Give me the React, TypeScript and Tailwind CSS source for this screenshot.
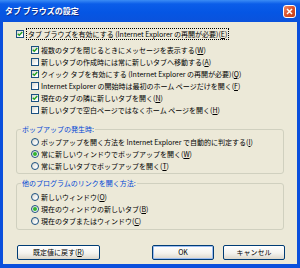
import React from 'react';

const Acc = ({ k }: { k: string }) => (
  <>
    (<span className="underline">{k}</span>)
  </>
);

function CheckBox({ checked }: { checked?: boolean }) {
  return (
    <span className="flex h-[8px] w-[8px] shrink-0 items-center justify-center border border-[#1c5180] bg-[linear-gradient(135deg,#d8d8d0,#ffffff_80%)]">
      {checked && (
        <svg width="6" height="6" viewBox="0 0 6 6">
          <path d="M0.7 2.7 L2.3 4.3 L5.3 1.1" stroke="#21a121" strokeWidth="1.4" fill="none" />
        </svg>
      )}
    </span>
  );
}

function Radio({ checked }: { checked?: boolean }) {
  return (
    <span className="flex h-[8px] w-[8px] shrink-0 items-center justify-center rounded-full border border-[#1c5180] bg-[linear-gradient(135deg,#d8d8d0,#ffffff_80%)]">
      {checked && <span className="h-[4px] w-[4px] rounded-full bg-[#2fb32f]" />}
    </span>
  );
}

function Row({ children, checked, radio }: { children: React.ReactNode; checked?: boolean; radio?: boolean }) {
  return (
    <div className="flex h-[12px] items-center whitespace-nowrap">
      {radio ? <Radio checked={checked} /> : <CheckBox checked={checked} />}
      <span className="ml-[2px]">{children}</span>
    </div>
  );
}

function Button({ children, width, isDefault }: { children: React.ReactNode; width: string; isDefault?: boolean }) {
  return (
    <button
      className={
        'flex h-[15px] items-center justify-center rounded-[2px] border border-[#003c74] bg-[linear-gradient(to_bottom,#ffffff,#f4f3ee_55%,#dcd7cb)] text-[7px] leading-none text-black ' +
        width +
        (isDefault ? ' shadow-[inset_0_0_0_1px_#9dbdf0]' : '')
      }
    >
      {children}
    </button>
  );
}

export default function App() {
  return (
    <div className="flex h-[268px] w-[300px] flex-col bg-[#0a4fdc] font-['Noto_Sans_CJK_JP',sans-serif] text-[7px] text-black">
      <div className="flex h-[22px] shrink-0 items-center justify-between bg-[linear-gradient(to_bottom,#3b8cf5_0%,#0b5de9_18%,#0556e4_55%,#0a52dc_100%)] pl-[5px] pr-[4px]">
        <span className="text-[8px] font-bold text-white [text-shadow:1px_1px_0_#0c2d8c]">タブ ブラウズの設定</span>
        <span className="flex h-[13px] w-[13px] items-center justify-center rounded-[3px] border border-white bg-[linear-gradient(135deg,#eb8a6b,#d9522b_50%,#c2401a)]">
          <svg width="7" height="7" viewBox="0 0 7 7">
            <path d="M1 1 L6 6 M6 1 L1 6" stroke="#ffffff" strokeWidth="1.5" />
          </svg>
        </span>
      </div>

      <div className="mx-[3px] mb-[4px] flex flex-1 flex-col bg-[#ece9d8]">
        <div className="flex flex-col px-[13px] pt-[6px]">
          <div className="flex h-[12px] items-center whitespace-nowrap">
            <CheckBox checked />
            <span className="ml-[2px] border border-dotted border-black px-[1px] leading-[10px]">
              タブ ブラウズを有効にする (Internet Explorer の再開が必要)<Acc k="E" />
            </span>
          </div>
          <div className="mt-[4px] flex flex-col pl-[15px]">
            <Row checked>
              複数のタブを閉じるときにメッセージを表示する<Acc k="W" />
            </Row>
            <Row>
              新しいタブの作成時には常に新しいタブへ移動する<Acc k="A" />
            </Row>
            <Row checked>
              クイック タブを有効にする (Internet Explorer の再開が必要)<Acc k="Q" />
            </Row>
            <Row>
              Internet Explorer の開始時は最初のホーム ページだけを開く<Acc k="F" />
            </Row>
            <Row checked>
              現在のタブの隣に新しいタブを開く<Acc k="N" />
            </Row>
            <Row>
              新しいタブで空白ページではなくホーム ページを開く<Acc k="H" />
            </Row>
          </div>
        </div>

        <fieldset className="mx-[13px] mt-[7px] rounded-[3px] border border-[#d0d0bf]">
          <legend className="ml-[4px] px-[1px] leading-[12px] text-[#0046d5]">ポップアップの発生時:</legend>
          <div className="flex flex-col pb-[1px] pl-[14px] pt-[1px]">
            <Row radio>
              ポップアップを開く方法を Internet Explorer で自動的に判定する<Acc k="I" />
            </Row>
            <Row radio checked>
              常に新しいウィンドウでポップアップを開く<Acc k="W" />
            </Row>
            <Row radio>
              常に新しいタブでポップアップを開く<Acc k="T" />
            </Row>
          </div>
        </fieldset>

        <fieldset className="mx-[13px] mt-[3px] rounded-[3px] border border-[#d0d0bf]">
          <legend className="ml-[4px] px-[1px] leading-[12px] text-[#0046d5]">他のプログラムのリンクを開く方法:</legend>
          <div className="flex flex-col pb-[2px] pl-[14px] pt-[2px]">
            <Row radio>
              新しいウィンドウ<Acc k="O" />
            </Row>
            <Row radio checked>
              現在のウィンドウの新しいタブ<Acc k="B" />
            </Row>
            <Row radio>
              現在のタブまたはウィンドウ<Acc k="C" />
            </Row>
          </div>
        </fieldset>

        <div className="mt-[15px] flex items-center pl-[14px] pr-[12px]">
          <Button width="w-[83px]">
            既定値に戻す<Acc k="R" />
          </Button>
          <div className="ml-auto flex gap-[9px]">
            <Button width="w-[62px]" isDefault>
              OK
            </Button>
            <Button width="w-[62px]">キャンセル</Button>
          </div>
        </div>
      </div>
    </div>
  );
}
